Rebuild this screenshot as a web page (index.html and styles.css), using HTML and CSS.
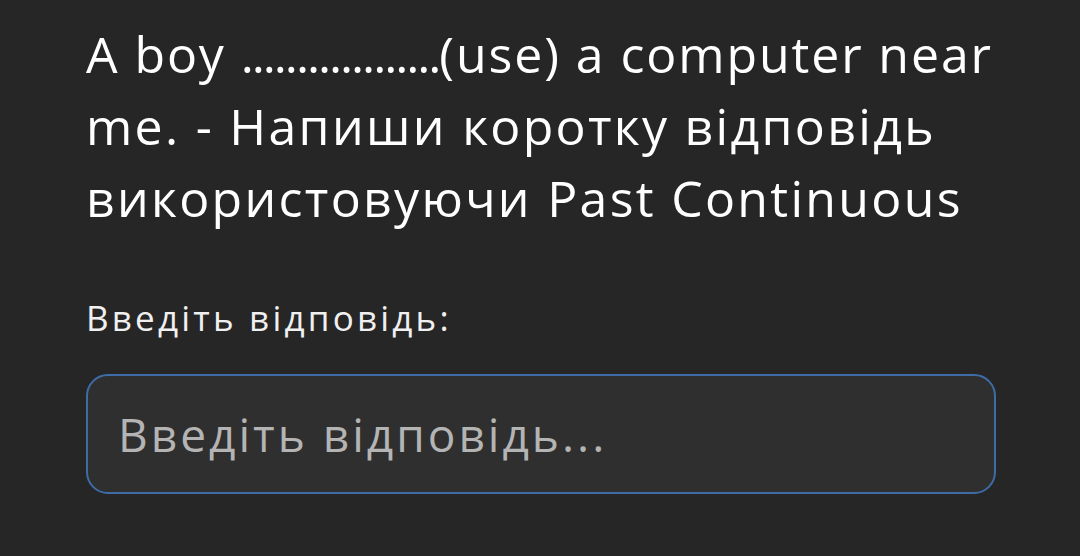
FILE: index.html
```html
<!DOCTYPE html>
<html lang="uk">
<head>
<meta charset="utf-8">
<link rel="stylesheet" href="styles.css">
</head>
<body>
<main class="card">
  <h1 class="question"><span class="tight">A boy <span class="dots">..................</span>(use) a computer near</span> me. - Напиши коротку відповідь використовуючи Past Continuous</h1>
  <label class="label" for="answer">Введіть відповідь:</label>
  <input class="answer" id="answer" type="text" placeholder="Введіть відповідь...">
</main>
</body>
</html>
```
FILE: styles.css
```css
html, body {
  margin: 0;
  padding: 0;
  background: #262626;
}
.card {
  padding: 18px 0 0 86px;
  width: 930px;
  display: flex;
  flex-direction: column;
  align-items: flex-start;
  font-family: "Open Sans", "Noto Sans", sans-serif;
}
.question {
  margin: 0;
  font-size: 50px;
  font-weight: 400;
  line-height: 72px;
  letter-spacing: 2.3px;
  color: #ffffff;
}
.tight {
  letter-spacing: 1.9px;
}
.dots {
  letter-spacing: -2.1px;
}
.label {
  margin-top: 60px;
  font-size: 35px;
  line-height: 48px;
  letter-spacing: 3.2px;
  color: #f0f0f0;
}
.answer {
  margin-top: 32px;
  box-sizing: border-box;
  width: 910px;
  height: 120px;
  padding: 0 30px;
  border: 2px solid #3e6ca6;
  border-radius: 22px;
  background: #2f2f2f;
  color: #eeeeee;
  font-family: "Open Sans", "Noto Sans", sans-serif;
  font-size: 46px;
  letter-spacing: 3px;
  outline: none;
}
.answer::placeholder {
  color: #b4b4b4;
}
```
